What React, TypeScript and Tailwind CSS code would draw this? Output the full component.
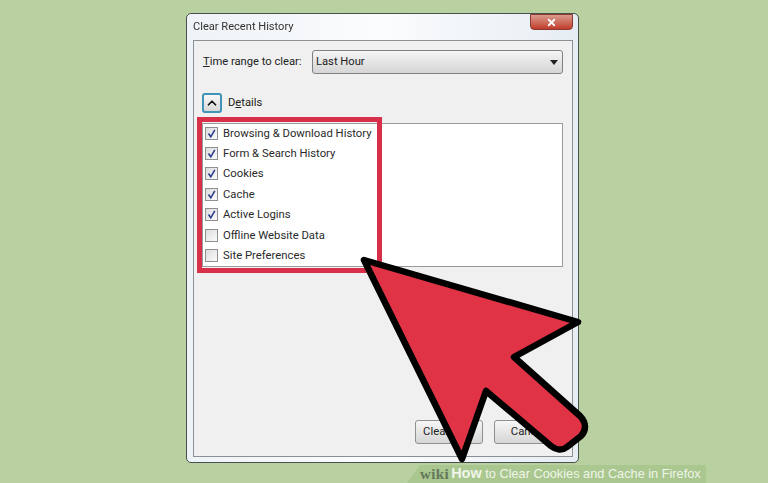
import React from 'react';
import { ChevronUp, X } from 'lucide-react';

const items = [
  { label: 'Browsing & Download History', checked: true },
  { label: 'Form & Search History', checked: true },
  { label: 'Cookies', checked: true },
  { label: 'Cache', checked: true },
  { label: 'Active Logins', checked: true },
  { label: 'Offline Website Data', checked: false },
  { label: 'Site Preferences', checked: false },
];

const CheckRow: React.FC<{ label: string; checked: boolean }> = ({ label, checked }) => (
  <div className="flex h-[20.4px] items-center gap-[5px]">
    <div className="flex h-[13px] w-[13px] items-center justify-center border border-[#8e8f8f] bg-gradient-to-br from-[#dcdcdc] to-[#fbfbfb]">
      {checked && (
        <svg viewBox="0 0 11 11" className="h-[11px] w-[11px]">
          <path d="M2.5 5.5 L4.8 8.8 L8.8 1.8" fill="none" stroke="#2d3f8f" strokeWidth="1.6" />
        </svg>
      )}
    </div>
    <span className="text-[11.3px] leading-none text-[#2a2a2a]">{label}</span>
  </div>
);

const WizardButton: React.FC<{ label: string }> = ({ label }) => (
  <div className="flex h-[24px] w-[68px] items-center justify-center rounded-[3px] border border-[#8f8f8f] bg-gradient-to-b from-[#f6f6f6] to-[#d6d6d6] text-[11.3px] text-[#222]">
    {label}
  </div>
);

export default function App() {
  return (
    <div className="relative h-[483px] w-[768px] overflow-hidden bg-[#b9d1a1] font-['Roboto',sans-serif]">
      <div className="ml-[186px] mt-[13px] inline-flex h-[450px] w-[393px] flex-col rounded-[5px] border border-[#4a4f50] bg-gradient-to-r from-[#eef3f7] via-[#fbfcfd] to-[#e6edf3] pb-[5px] pl-[6px] pr-[5px] blur-[0.35px]">
        <div className="relative flex h-[26px] shrink-0 items-center text-[11.1px] text-[#333]">
          Clear Recent History
          <div className="absolute right-0 top-0 flex h-[16px] w-[43px] items-center justify-center rounded-b-[4px] border border-[#8a3a30] bg-gradient-to-b from-[#d99a8c] to-[#c0392b]">
            <X className="h-[11px] w-[11px] text-white" strokeWidth={4} />
          </div>
        </div>

        <div className="flex min-h-0 flex-1 flex-col border border-[#8c9092] bg-[#f0f0f0] pl-[8px] pr-[9px]">
          <div className="mt-[9px] flex items-center gap-[8px]">
            <span className="w-[102px] whitespace-nowrap pl-[1px] text-[11.2px] text-[#222]">
              <span className="underline">T</span>ime range to clear:
            </span>
            <div className="flex h-[24px] flex-1 items-center justify-between rounded-[3px] border border-[#7e8182] bg-gradient-to-b from-[#f5f5f5] to-[#d5d5d5] pl-[3px] pr-[4px] text-[11.2px] text-[#222]">
              Last Hour
              <svg viewBox="0 0 8 5" className="h-[5px] w-[8px]">
                <path d="M0 0H8L4 5Z" fill="#222" />
              </svg>
            </div>
          </div>

          <div className="mt-[19px] flex items-center gap-[6px]">
            <div className="flex h-[20px] w-[20px] items-center justify-center rounded-[3px] border-2 border-[#3f94b8] bg-gradient-to-b from-[#f8f8f8] to-[#d8d8d8]">
              <ChevronUp className="h-[14px] w-[14px] text-[#111]" strokeWidth={3} />
            </div>
            <span className="text-[11.2px] text-[#222]">
              D<span className="underline">e</span>tails
            </span>
          </div>

          <div className="relative mt-[10px] h-[144px] border border-[#9a9a9a] bg-white pl-[2px]">
            <div className="-mt-px flex flex-col">
              {items.map((item) => (
                <CheckRow key={item.label} label={item.label} checked={item.checked} />
              ))}
            </div>
            <div className="absolute left-[-6px] top-[-7px] h-[156px] w-[185px] border-[5px] border-[#d8304a]" />
          </div>

          <div className="mb-[12px] mr-[1px] mt-auto flex justify-end gap-[11px]">
            <WizardButton label="Clear Now" />
            <WizardButton label="Cancel" />
          </div>
        </div>
      </div>

      <svg className="absolute left-0 top-0 h-[483px] w-[768px]" viewBox="0 0 768 483">
        <path
          d="M364 260 L578 322 L514 357 L580 416 C587 423 586 431 581 436 L567 447 C562 451 556 450 551 446 L486 391 L462 459 Z"
          fill="#e13346"
          stroke="#000"
          strokeWidth="6.5"
          strokeLinejoin="round"
        />
      </svg>

      <div className="absolute bottom-0 left-[407px] flex h-[18px] w-[299px] items-center bg-[#a9c78f] pl-[13px] [clip-path:polygon(13px_0,100%_0,100%_100%,0_100%)]">
        <span className="font-['Liberation_Serif',serif] text-[15px] font-bold tracking-[0.4px] text-[#66785c]">wiki</span>
        <span className="ml-[2px] whitespace-nowrap font-['Liberation_Sans',sans-serif] text-[12.75px] text-[#f0f5ea]">
          <span className="text-[14.5px] font-bold">How</span> to Clear Cookies and Cache in Firefox
        </span>
      </div>
    </div>
  );
}
